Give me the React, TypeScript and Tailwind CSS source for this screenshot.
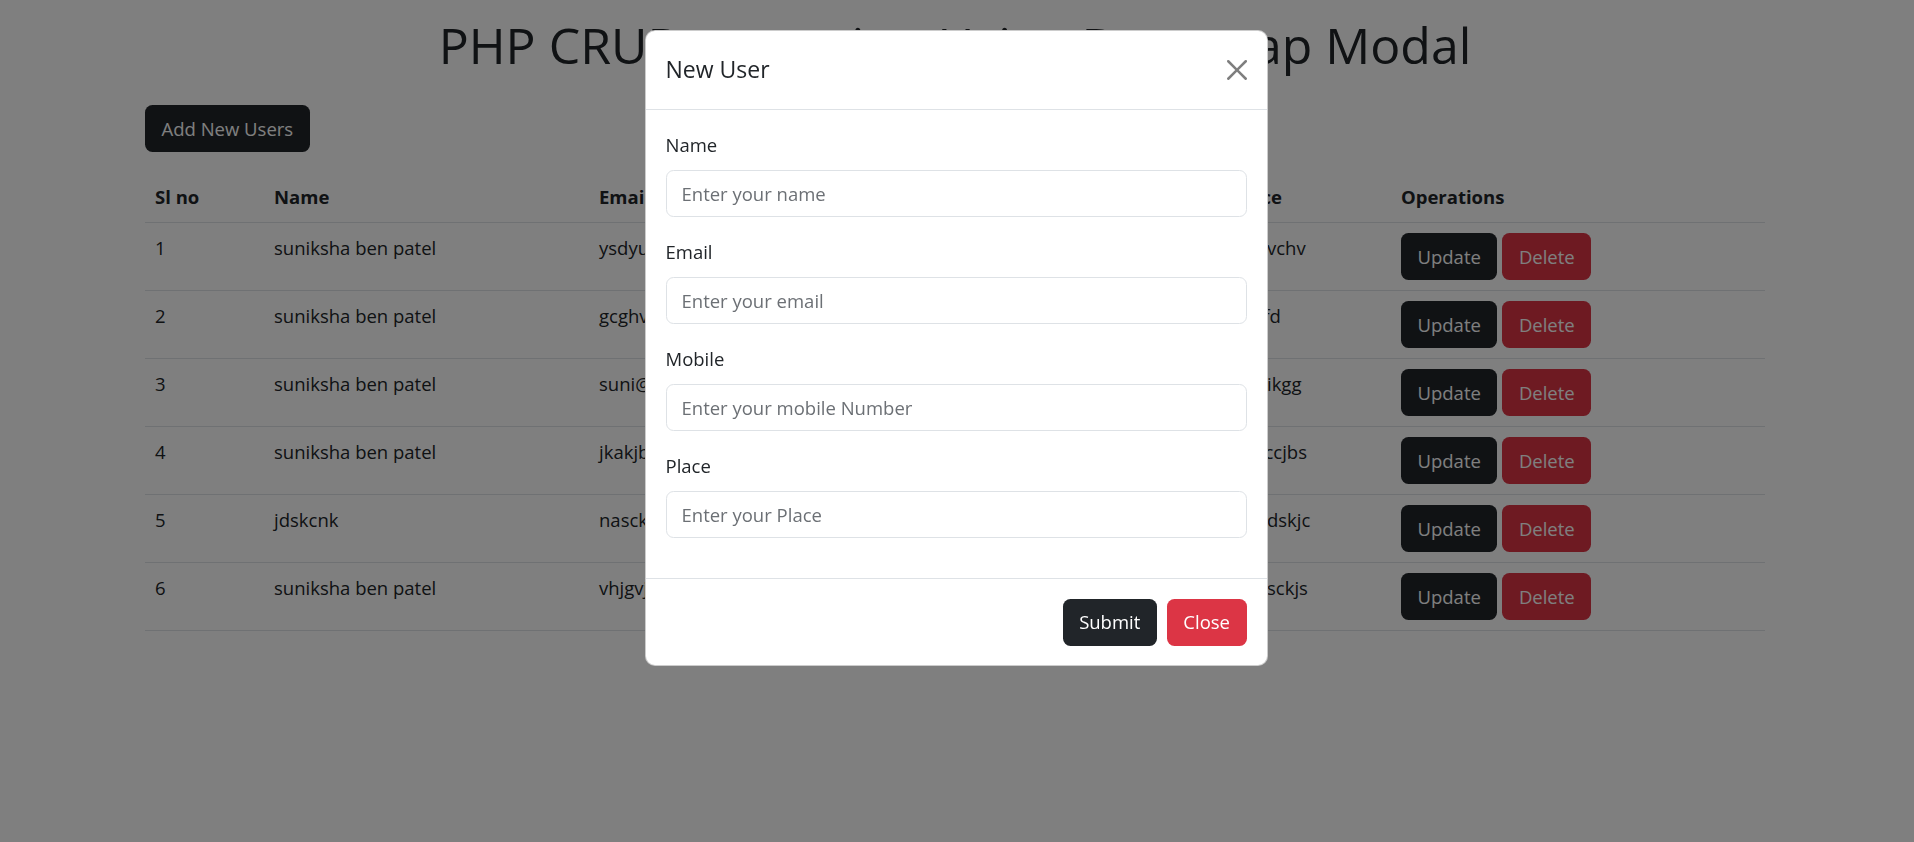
const users = [
  { id: 1, name: 'suniksha ben patel', email: 'ysdyuvg@gmail.com', mobile: '9876543210', place: 'bdhvchv' },
  { id: 2, name: 'suniksha ben patel', email: 'gcghvh@gmail.com', mobile: '9876543211', place: 'sdgfd' },
  { id: 3, name: 'suniksha ben patel', email: 'suni@gmail.com', mobile: '9876543212', place: 'hbdikgg' },
  { id: 4, name: 'suniksha ben patel', email: 'jkakjbsd@gmail.com', mobile: '9876543213', place: 'hbsccjbs' },
  { id: 5, name: 'jdskcnk', email: 'nasckjn@gmail.com', mobile: '9876543214', place: 'hbddskjc' },
  { id: 6, name: 'suniksha ben patel', email: 'vhjgvj@gmail.com', mobile: '9876543215', place: 'hbdsckjs' },
];

const fields = [
  { label: 'Name', placeholder: 'Enter your name' },
  { label: 'Email', placeholder: 'Enter your email' },
  { label: 'Mobile', placeholder: 'Enter your mobile Number' },
  { label: 'Place', placeholder: 'Enter your Place' },
];

function UserTable() {
  return (
    <table className="mt-[20px] w-full table-fixed border-collapse text-left">
      <colgroup>
        <col className="w-[119px]" />
        <col className="w-[325px]" />
        <col className="w-[330px]" />
        <col className="w-[304px]" />
        <col className="w-[168px]" />
        <col />
      </colgroup>
      <thead>
        <tr className="border-b border-[#dee2e6]">
          {['Sl no', 'Name', 'Email', 'Mobile', 'Place', 'Operations'].map((h) => (
            <th key={h} className="p-[10px] align-top font-bold">
              {h}
            </th>
          ))}
        </tr>
      </thead>
      <tbody>
        {users.map((u) => (
          <tr key={u.id} className="border-b border-[#dee2e6]">
            <td className="p-[10px] align-top">{u.id}</td>
            <td className="p-[10px] align-top">{u.name}</td>
            <td className="p-[10px] align-top">{u.email}</td>
            <td className="p-[10px] align-top">{u.mobile}</td>
            <td className="p-[10px] align-top">{u.place}</td>
            <td className="p-[10px] align-top">
              <div className="flex gap-[5px]">
                <button className="h-[47px] rounded-[7.5px] bg-[#212529] px-[16.5px] text-white">Update</button>
                <button className="h-[47px] rounded-[7.5px] bg-[#dc3545] px-[16.5px] text-white">Delete</button>
              </div>
            </td>
          </tr>
        ))}
      </tbody>
    </table>
  );
}

function NewUserModal() {
  return (
    <div className="fixed inset-0 z-20 flex justify-center pr-[2px]">
      <div className="mt-[30px] h-fit w-[623px] rounded-[10px] border border-black/20 bg-white">
        <div className="flex items-center justify-between border-b border-[#dee2e6] p-[20px]">
          <h5 className="text-[23px] leading-[37.5px] font-normal">New User</h5>
          <svg viewBox="0 0 16 16" className="h-[20px] w-[20px] opacity-50" fill="#000">
            <path d="M.293.293a1 1 0 0 1 1.414 0L8 6.586 14.293.293a1 1 0 1 1 1.414 1.414L9.414 8l6.293 6.293a1 1 0 0 1-1.414 1.414L8 9.414l-6.293 6.293a1 1 0 0 1-1.414-1.414L6.586 8 .293 1.707a1 1 0 0 1 0-1.414z" />
          </svg>
        </div>
        <div className="p-[20px]">
          {fields.map((f) => (
            <div key={f.label} className="mb-[20px]">
              <label className="mb-[10px] block">{f.label}</label>
              <input
                placeholder={f.placeholder}
                className="block h-[47px] w-full rounded-[7.5px] border border-[#dee2e6] bg-white px-[15px] text-[#212529] outline-none placeholder:text-[#6c7075]"
              />
            </div>
          ))}
        </div>
        <div className="flex justify-end gap-[10px] border-t border-[#dee2e6] px-[20px] pt-[20px] pb-[19px]">
          <button className="h-[47px] rounded-[7.5px] bg-[#212529] px-[16.5px] text-white">Submit</button>
          <button className="h-[47px] rounded-[7.5px] bg-[#dc3545] px-[16.5px] text-white">Close</button>
        </div>
      </div>
    </div>
  );
}

export default function App() {
  return (
    <div className="relative min-h-[842px] bg-white font-['Open_Sans',sans-serif] text-[18.5px] leading-[30px] text-[#212529]">
      <div className="ml-[145px] w-[1620px]">
        <h1 className="pt-[15px] text-center text-[50px] leading-[60px] font-medium">
          PHP CRUD operation Using Bootstrap Modal
        </h1>
        <button className="mt-[30px] h-[47px] rounded-[7.5px] bg-[#212529] px-[16.5px] text-white">
          Add New Users
        </button>
        <UserTable />
      </div>

      <div className="fixed inset-0 z-10 bg-black/50" />
      <NewUserModal />
    </div>
  );
}
